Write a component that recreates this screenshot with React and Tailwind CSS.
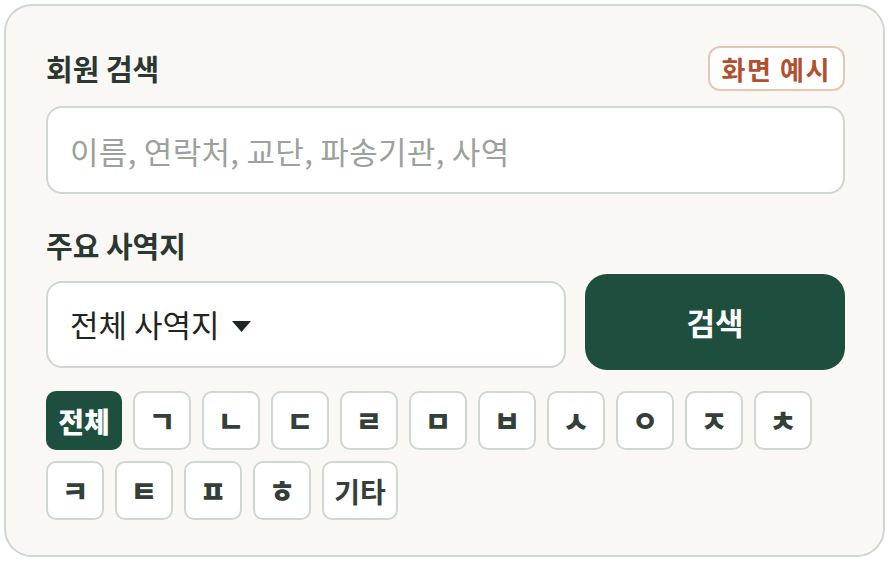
const letters = ['ㄱ', 'ㄴ', 'ㄷ', 'ㄹ', 'ㅁ', 'ㅂ', 'ㅅ', 'ㅇ', 'ㅈ', 'ㅊ', 'ㅋ', 'ㅌ', 'ㅍ', 'ㅎ'];

const MemberSearch = () => {
    return (
        <div className="w-[888px] h-[561px] bg-white p-1 font-['Noto_Sans_CJK_KR',sans-serif]">
            <div className="w-[881px] h-[553px] rounded-[28px] border-2 border-[#d0d6d1] bg-[#faf8f4] pl-[40px] pr-[38px] pt-[40px]">
                {/* Header */}
                <div className="flex items-center justify-between h-[45px]">
                    <h2 className="text-[29px] font-bold leading-none text-[#2b3832]">회원 검색</h2>
                    <span className="h-[45px] px-[12px] flex items-center rounded-[12px] border-2 border-[#e8c6b4] bg-white text-[26px] font-bold tracking-[0.06em] text-[#b0502e]">
                        화면 예시
                    </span>
                </div>

                {/* Keyword input */}
                <input
                    type="text"
                    placeholder="이름, 연락처, 교단, 파송기관, 사역"
                    className="mt-[15px] w-full h-[88px] rounded-[16px] border-2 border-[#d0d6d1] bg-white px-[22px] text-[31px] tracking-[0.01em] text-[#1f2622] placeholder:text-[#9ba29d] outline-none"
                />

                {/* Region */}
                <h2 className="mt-[33px] text-[29px] font-bold leading-[36px] text-[#2b3832]">주요 사역지</h2>
                <div className="mt-[11px] flex gap-[19px] h-[96px]">
                    <div className="flex-1 self-end mb-[2px] h-[87px] rounded-[16px] border-2 border-[#d0d6d1] bg-white px-[22px] flex items-center gap-[12px] text-[31px] text-[#1f2622]">
                        <span>전체 사역지</span>
                        <svg width="19" height="11" viewBox="0 0 19 11" className="mt-[3px]">
                            <path d="M0 0 L19 0 L9.5 11 Z" fill="#1f2622" />
                        </svg>
                    </div>
                    <button className="w-[260px] h-[96px] rounded-[22px] bg-[#1e4f3e] text-[31px] font-bold text-white">
                        검색
                    </button>
                </div>

                {/* Initial filter */}
                <div className="mt-[21px] flex flex-wrap gap-x-[11px] gap-y-[11px]">
                    <button className="w-[76px] h-[59px] rounded-[10px] bg-[#1e4f3e] text-[28px] font-extrabold text-white">
                        전체
                    </button>
                    {letters.map((l) => (
                        <button
                            key={l}
                            className="w-[58px] h-[59px] rounded-[10px] border-2 border-[#d0d6d1] bg-white text-[29px] font-black text-[#333f39]"
                        >
                            {l}
                        </button>
                    ))}
                    <button className="w-[76px] h-[59px] rounded-[10px] border-2 border-[#d0d6d1] bg-white text-[28px] font-bold text-[#333f39]">
                        기타
                    </button>
                </div>
            </div>
        </div>
    );
};

export default function App() {
    return <MemberSearch />;
}
